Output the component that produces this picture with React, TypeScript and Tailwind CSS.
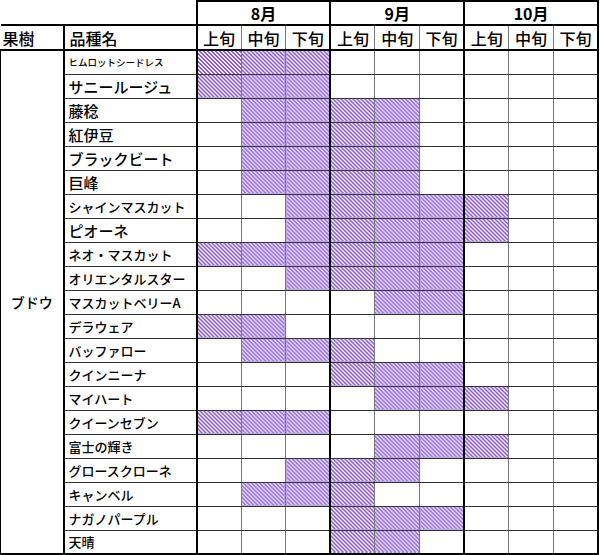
import React from 'react';

type Variety = { name: string; size: string; on: number[] };

// 収穫時期 (0..8 = 8月上旬 .. 10月下旬)
const varieties: Variety[] = [
  { name: 'ヒムロットシードレス', size: 'text-[9.5px]', on: [0, 1, 2] },
  { name: 'サニールージュ', size: 'text-[15px]', on: [0, 1, 2] },
  { name: '藤稔', size: 'text-[15px]', on: [1, 2, 3, 4] },
  { name: '紅伊豆', size: 'text-[15px]', on: [1, 2, 3, 4] },
  { name: 'ブラックビート', size: 'text-[15px]', on: [1, 2, 3, 4] },
  { name: '巨峰', size: 'text-[15px]', on: [1, 2, 3, 4] },
  { name: 'シャインマスカット', size: 'text-[13px]', on: [2, 3, 4, 5, 6] },
  { name: 'ピオーネ', size: 'text-[15px]', on: [2, 3, 4, 5, 6] },
  { name: 'ネオ・マスカット', size: 'text-[13px]', on: [0, 1, 2, 3, 4, 5] },
  { name: 'オリエンタルスター', size: 'text-[13px]', on: [2, 3, 4, 5] },
  { name: 'マスカットベリーA', size: 'text-[13px]', on: [4, 5] },
  { name: 'デラウェア', size: 'text-[13px]', on: [0, 1] },
  { name: 'バッファロー', size: 'text-[13px]', on: [1, 2, 3] },
  { name: 'クインニーナ', size: 'text-[13px]', on: [3, 4, 5] },
  { name: 'マイハート', size: 'text-[13px]', on: [4, 5, 6] },
  { name: 'クイーンセブン', size: 'text-[13px]', on: [0, 1, 2] },
  { name: '富士の輝き', size: 'text-[13px]', on: [4, 5, 6] },
  { name: 'グロースクローネ', size: 'text-[13px]', on: [2, 3, 4] },
  { name: 'キャンベル', size: 'text-[13px]', on: [1, 2, 3] },
  { name: 'ナガノパープル', size: 'text-[13px]', on: [3, 4, 5] },
  { name: '天晴', size: 'text-[13px]', on: [3, 4] },
];

const months = ['8月', '9月', '10月'];
const periods = ['上旬', '中旬', '下旬'];

const hatch =
  'bg-[repeating-linear-gradient(45deg,#8a5bd1_0px,#8a5bd1_1.4px,#f1e9fb_1.4px,#f1e9fb_2.8px)]';

const App = () => {
  return (
    <div className="w-[600px] h-[555px] bg-white font-['Noto_Sans_CJK_JP',sans-serif] text-black">
      <table className="table-fixed border-collapse w-[599px]">
        <colgroup>
          <col className="w-[63px]" />
          <col className="w-[133px]" />
          {Array.from({ length: 9 }).map((_, i) => (
            <col key={i} />
          ))}
        </colgroup>
        <thead>
          <tr className="h-[24px]">
            <th colSpan={2} className="border-b-2 border-r-2 border-black" />
            {months.map((m) => (
              <th
                key={m}
                colSpan={3}
                className="border-2 border-black text-[16px] font-semibold leading-none text-center"
              >
                {m}
              </th>
            ))}
          </tr>
          <tr className="h-[25px]">
            <th className="border-b-2 border-r-2 border-black text-left pl-[2px] text-[16px] font-medium leading-none">
              果樹
            </th>
            <th className="border-b-2 border-r-2 border-black text-left pl-[5px] text-[16px] font-medium leading-none">
              品種名
            </th>
            {months.map((m) =>
              periods.map((p, j) => (
                <th
                  key={m + p}
                  className={`border-b-2 border-black text-[16px] font-medium leading-none text-center ${
                    j === 2 ? 'border-r-2 border-r-black' : 'border-r border-r-[#777]'
                  }`}
                >
                  {p}
                </th>
              ))
            )}
          </tr>
        </thead>
        <tbody>
          {varieties.map((v, r) => {
            const last = r === varieties.length - 1;
            return (
              <tr key={v.name} className="h-[24px]">
                {r === 0 && (
                  <td
                    rowSpan={varieties.length}
                    className="border-l border-r-2 border-b-2 border-black text-center align-middle text-[14px] font-medium leading-none"
                  >
                    ブドウ
                  </td>
                )}
                <td
                  className={`border-r-2 border-r-black pl-[4px] whitespace-nowrap font-medium leading-none ${v.size} ${
                    last ? 'border-b-2 border-b-black' : 'border-b border-b-[#333]'
                  }`}
                >
                  {v.name}
                </td>
                {Array.from({ length: 9 }).map((_, c) => (
                  <td
                    key={c}
                    className={`${v.on.includes(c) ? hatch : ''} ${
                      c % 3 === 2 ? 'border-r-2 border-r-black' : 'border-r border-r-[#777]'
                    } ${last ? 'border-b-2 border-b-black' : 'border-b border-b-[#333]'}`}
                  />
                ))}
              </tr>
            );
          })}
        </tbody>
      </table>
    </div>
  );
};

export default App;
